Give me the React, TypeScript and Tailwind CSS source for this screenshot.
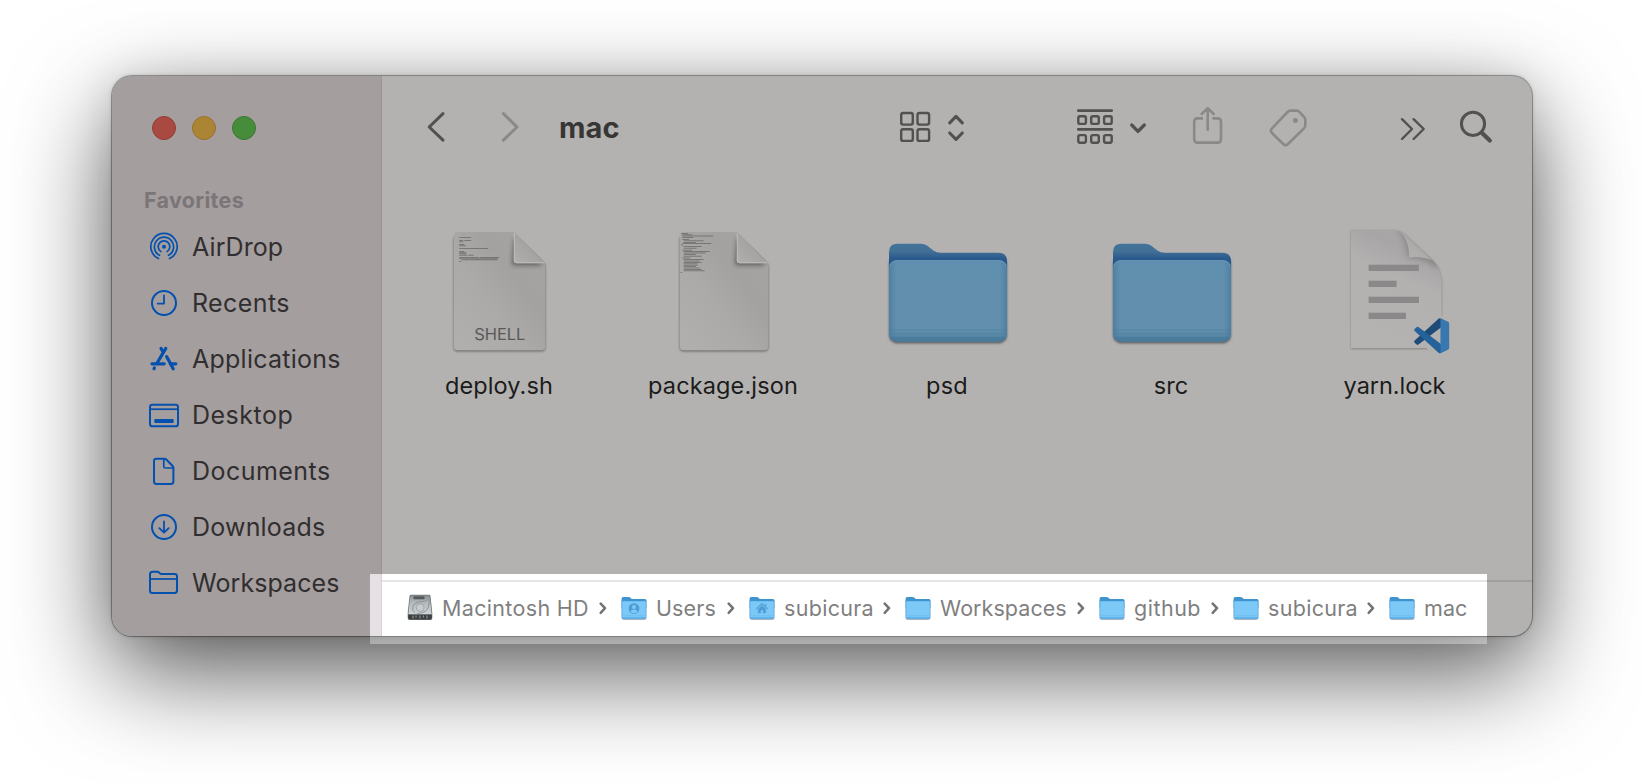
import React from "react";
import type { ReactNode } from "react";

const FONT = "font-['Inter','Liberation_Sans',sans-serif]";

/* ---------- sidebar ---------- */

function SideIcon({ children }: { children: ReactNode }) {
  return (
    <svg
      className="h-8 w-8 shrink-0 text-[#0450ae]"
      viewBox="-16 -16 32 32"
      fill="none"
      stroke="currentColor"
      strokeWidth="2"
      strokeLinecap="round"
      strokeLinejoin="round"
    >
      {children}
    </svg>
  );
}

const favorites: { label: string; track: string; pad: string; icon: ReactNode }[] = [
  {
    label: "AirDrop",
    track: "tracking-[0.1px]",
    pad: "pl-3",
    icon: (
      <g strokeWidth="1.7" transform="translate(0 -0.3)">
        <circle r="2" fill="currentColor" stroke="none" />
        <path d="M-5.6 11.9 A13.2 13.2 0 1 1 5.6 11.9" />
        <path d="M-4.5 8.6 A9.6 9.6 0 1 1 4.5 8.6" />
        <path d="M-3.1 4.9 A5.8 5.8 0 1 1 3.1 4.9" />
      </g>
    ),
  },
  {
    label: "Recents",
    track: "tracking-[0.4px]",
    pad: "pl-3",
    icon: (
      <g>
        <circle r="12" />
        <path strokeWidth="1.8" d="M0 -7.6V0.6H-6.4" />
      </g>
    ),
  },
  {
    label: "Applications",
    track: "tracking-[0.25px]",
    pad: "pl-3",
    icon: (
      <g strokeWidth="3.2" transform="translate(0 -0.2)">
        <path d="M1.8 -10.4L-6.9 4.2" />
        <path d="M-3 -10.4L-1.6 -8" />
        <path d="M-12 5H0.2" />
        <path d="M6.4 5H11.8" />
        <path d="M2.6 -2.2L9.2 10" />
        <path d="M-9.6 9.2L-10 9.9" />
      </g>
    ),
  },
  {
    label: "Desktop",
    track: "tracking-[0.5px]",
    pad: "pl-3",
    icon: (
      <g>
        <rect x="-14" y="-10.3" width="28" height="21.6" rx="2.4" />
        <path strokeWidth="1.7" strokeLinecap="butt" d="M-14 -5.8H14" />
        <rect x="-9.7" y="4" width="19.4" height="3.9" rx="0.8" fill="currentColor" stroke="none" />
      </g>
    ),
  },
  {
    label: "Documents",
    track: "tracking-[0.45px]",
    pad: "pl-3",
    icon: (
      <g>
        <path d="M-7.8 -12.3H0.4Q1.5 -12.3 2.3 -11.5L8.6 -5Q9.4 -4.2 9.4 -3V10.6Q9.4 13 7 13H-7.6Q-10 13 -10 10.6V-9.9Q-10 -12.3 -7.8 -12.3Z" />
        <path strokeWidth="1.7" d="M-0.2 -11.6V-4.4Q-0.2 -3 1.2 -3H8.6" />
      </g>
    ),
  },
  {
    label: "Downloads",
    track: "tracking-[0.2px]",
    pad: "pl-3",
    icon: (
      <g>
        <circle r="12" />
        <path strokeWidth="1.8" d="M0 -5.6V5.4M-4.7 1.1L0 5.6L4.7 1.1" />
      </g>
    ),
  },
  {
    label: "Workspaces",
    track: "tracking-[0.08px]",
    pad: "pl-3",
    icon: (
      <g>
        <path d="M-14 7.8V-8.7Q-14 -11.3 -11.4 -11.3H-6.9Q-5.7 -11.3 -4.9 -10.5L-4.3 -9.9Q-3.4 -9 -2.2 -9H10.6Q13 -9 13 -6.6V7.6Q13 10 10.6 10H-11.6Q-14 10 -14 7.8Z" />
        <path strokeWidth="1.7" strokeLinecap="butt" d="M-14 -4H13" />
      </g>
    ),
  },
];

function Sidebar() {
  return (
    <aside className="flex w-[270px] shrink-0 flex-col rounded-l-[20px] border-r border-[#9b9597] bg-[#a49e9f]">
      <div className="flex gap-4 pl-10 pt-10">
        <span className="h-6 w-6 rounded-full border border-[#963a33] bg-[#a94a42]" />
        <span className="h-6 w-6 rounded-full border border-[#97702b] bg-[#ac8534]" />
        <span className="h-6 w-6 rounded-full border border-[#357a2c] bg-[#478c3b]" />
      </div>
      <h2 className="mt-[46px] pl-8 text-[21.5px] font-bold leading-[28px] tracking-[0.3px] text-[#7b7577]">
        Favorites
      </h2>
      <ul className="mt-[5px]">
        {favorites.map((f) => (
          <li key={f.label} className="flex h-14 items-center pl-9">
            <SideIcon>{f.icon}</SideIcon>
            <span className={`${f.pad} ${f.track} text-[25px] leading-[32px] text-[#312e2f]`}>{f.label}</span>
          </li>
        ))}
      </ul>
    </aside>
  );
}

/* ---------- toolbar ---------- */

const tool = "h-14 shrink-0";

function Toolbar() {
  return (
    <header className="flex h-[104px] items-start pl-[42px] pt-6 text-[#52514f]">
      <svg className={`${tool} w-6`} viewBox="424 100 24 56" fill="none" stroke="currentColor" strokeWidth="3" strokeLinecap="round" strokeLinejoin="round">
        <path d="M443 113.6L429.2 127L443 140.2" />
      </svg>
      <svg className={`${tool} ml-[52px] w-5 text-[#8a8987]`} viewBox="500 100 20 56" fill="none" stroke="currentColor" strokeWidth="3" strokeLinecap="round" strokeLinejoin="round">
        <path d="M503.4 113.6L517 127L503.4 140.2" />
      </svg>
      <h1 className="ml-[39px] w-[339px] pt-px text-[29px] font-bold leading-[54px] tracking-[0.1px] text-[#373635]">mac</h1>
      <svg className={`${tool} w-[34px]`} viewBox="898 100 34 56" fill="none" stroke="currentColor" strokeWidth="2.4">
        <rect x="901.2" y="113" width="11.6" height="11.6" rx="2" />
        <rect x="917.5" y="113" width="11.6" height="11.6" rx="2" />
        <rect x="901.2" y="129.3" width="11.6" height="11.6" rx="2" />
        <rect x="917.5" y="129.3" width="11.6" height="11.6" rx="2" />
      </svg>
      <svg className={`${tool} ml-3.5 w-5`} viewBox="946 100 20 56" fill="none" stroke="currentColor" strokeWidth="3.1" strokeLinecap="round" strokeLinejoin="round">
        <path d="M949.7 122.8L956 116.4L962.3 122.8M949.7 133L956 139.4L962.3 133" />
      </svg>
      <svg className={`${tool} ml-[109px] w-10`} viewBox="1075 100 40 56" fill="none" stroke="currentColor" strokeWidth="2.4">
        <path strokeWidth="2.8" strokeLinecap="round" d="M1078.3 110.6H1111.7M1078.3 129.4H1111.7" />
        <rect x="1078.3" y="116.3" width="7.6" height="7.6" rx="1.6" />
        <rect x="1091.2" y="116.3" width="7.6" height="7.6" rx="1.6" />
        <rect x="1104.1" y="116.3" width="7.6" height="7.6" rx="1.6" />
        <rect x="1078.3" y="135.1" width="7.6" height="7.6" rx="1.6" />
        <rect x="1091.2" y="135.1" width="7.6" height="7.6" rx="1.6" />
        <rect x="1104.1" y="135.1" width="7.6" height="7.6" rx="1.6" />
      </svg>
      <svg className={`${tool} ml-[13px] w-5`} viewBox="1128 100 20 56" fill="none" stroke="currentColor" strokeWidth="3.3" strokeLinecap="round" strokeLinejoin="round">
        <path d="M1131.7 125L1138 131.4L1144.3 125" />
      </svg>
      <svg className={`${tool} ml-[43px] w-[34px] text-[#8a8987]`} viewBox="1191 100 34 56" fill="none" stroke="currentColor" strokeWidth="2.6" strokeLinecap="round" strokeLinejoin="round">
        <path strokeLinecap="butt" d="M1203 118.4H1197.6Q1194.2 118.4 1194.2 121.8V139.2Q1194.2 142.6 1197.6 142.6H1217.6Q1221 142.6 1221 139.2V121.8Q1221 118.4 1217.6 118.4H1212.4" />
        <path d="M1207.7 108.6V129.8M1201.7 114L1207.7 108.3L1213.7 114" />
      </svg>
      <svg className={`${tool} ml-[43px] w-10 text-[#8a8987]`} viewBox="1268 100 40 56" fill="none" stroke="currentColor" strokeWidth="2.6" strokeLinejoin="round">
        <path d="M1290.6 110.6H1296.6Q1298.3 110.6 1299.4 111.8L1304.2 117.2Q1305.3 118.4 1305.3 120V125.2Q1305.3 127 1304 128.3L1288 144Q1285.6 146.2 1283.2 144L1272.2 133.2Q1269.7 130.6 1272.2 128.1L1287.6 112Q1288.9 110.6 1290.6 110.6Z" />
        <circle cx="1295.4" cy="120.5" r="2.5" fill="currentColor" stroke="none" />
      </svg>
      <svg className={`${tool} ml-[91px] w-7`} viewBox="1399 100 28 56" fill="none" stroke="currentColor" strokeWidth="2.4" strokeLinecap="round" strokeLinejoin="round">
        <path d="M1402 119.2L1412 129L1402 139M1413.6 119.2L1423.7 129L1413.6 139" />
      </svg>
      <svg className={`${tool} ml-[31px] w-[38px]`} viewBox="1458 100 38 56" fill="none" stroke="currentColor" strokeLinecap="round">
        <circle cx="1473" cy="123.8" r="11.6" strokeWidth="3" />
        <path strokeWidth="4.2" d="M1482.3 133.2L1489.8 140.6" />
      </svg>
    </header>
  );
}

/* ---------- files ---------- */

type Rows = [number, number, number][];

function PageGlyph({ id, left, right, fold, rows, tag }: { id: string; left: number; right: number; fold: number; rows: Rows; tag?: string }) {
  const r = right;
  const l = left;
  return (
    <svg className="h-34 w-32" viewBox="-64 220 128 136">
      <defs>
        <linearGradient id={`${id}-paper`} x1="0.1" y1="0.95" x2="0.9" y2="0.15">
          <stop offset="0" stopColor="#b0afae" />
          <stop offset="0.4" stopColor="#abaaa9" />
          <stop offset="0.7" stopColor="#a3a2a1" />
          <stop offset="1" stopColor="#a5a4a3" />
        </linearGradient>
        <linearGradient id={`${id}-fold`} x1="0" y1="1" x2="0.6" y2="0.4">
          <stop offset="0" stopColor="#b1b0af" />
          <stop offset="1" stopColor="#a1a09f" />
        </linearGradient>
        <filter id={`${id}-blur`} x="-50%" y="-50%" width="200%" height="200%">
          <feGaussianBlur stdDeviation="2.4" />
        </filter>
        <filter id={`${id}-soft`} x="-20%" y="-20%" width="140%" height="140%">
          <feGaussianBlur stdDeviation="0.9" />
        </filter>
        <clipPath id={`${id}-clip`}>
          <path d={`M${l + 4} 232H${fold + 1}L${r} 263.5V346.3Q${r} 350.3 ${r - 4} 350.3H${l + 4}Q${l} 350.3 ${l} 346.3V236Q${l} 232 ${l + 4} 232Z`} />
        </clipPath>
      </defs>
      <path
        d={`M${l + 4} 234H${fold}L${r} 265V347.6Q${r} 351.6 ${r - 4} 351.6H${l + 4}Q${l} 351.6 ${l} 347.6V238Z`}
        fill="#6d6c6b"
        filter={`url(#${id}-soft)`}
      />
      <g clipPath={`url(#${id}-clip)`}>
        <rect x={l} y="230" width={r - l} height="122" fill={`url(#${id}-paper)`} />
        <path d={`M${fold + 1} 238L${fold - 1} 265H${r - 6}L${r} 258Z`} fill="#4c4b4a" opacity="0.85" filter={`url(#${id}-blur)`} />
        <path d={`M${fold + 1} 232L${r} 263.3H${fold + 3.5}Q${fold + 0.5} 263.3 ${fold + 0.5} 260.3Z`} fill={`url(#${id}-fold)`} />
        <path d={`M${fold + 1} 233V260.3Q${fold + 1} 262.8 ${fold + 3.5} 262.8H${r - 1}`} fill="none" stroke="#bebdbc" strokeWidth="1.1" />
      </g>
      {rows.map(([x, y, w], i) => (
        <rect key={i} x={l + x} y={y} width={w} height="0.8" fill="#555453" opacity="0.7" />
      ))}
      {tag && (
        <text x="0.8" y="340" textAnchor="middle" fontSize="16.5" letterSpacing="-0.1" fill="#5a5958">
          {tag}
        </text>
      )}
    </svg>
  );
}

function FolderGlyph({ id }: { id: string }) {
  return (
    <svg className="h-34 w-32" viewBox="-64 220 128 136">
      <defs>
        <linearGradient id={`${id}-back`} x1="0" y1="0" x2="0" y2="1">
          <stop offset="0" stopColor="#44739a" />
          <stop offset="0.09" stopColor="#416f96" />
          <stop offset="0.17" stopColor="#2a5a8e" />
          <stop offset="0.25" stopColor="#2a5688" />
        </linearGradient>
        <linearGradient id={`${id}-front`} x1="0" y1="0" x2="0" y2="1">
          <stop offset="0" stopColor="#5e8eb0" />
          <stop offset="0.1" stopColor="#618fae" />
          <stop offset="0.84" stopColor="#628fad" />
          <stop offset="0.85" stopColor="#5988a7" />
          <stop offset="0.88" stopColor="#5f8dab" />
          <stop offset="0.9" stopColor="#5584a4" />
          <stop offset="0.93" stopColor="#5c8aa9" />
          <stop offset="0.945" stopColor="#4b7c9e" />
          <stop offset="1" stopColor="#4a7b9d" />
        </linearGradient>
        <linearGradient id={`${id}-edge`} x1="0" y1="0" x2="1" y2="0">
          <stop offset="0" stopColor="#47799f" stopOpacity="0.7" />
          <stop offset="0.06" stopColor="#47799f" stopOpacity="0" />
          <stop offset="0.94" stopColor="#47799f" stopOpacity="0" />
          <stop offset="1" stopColor="#47799f" stopOpacity="0.7" />
        </linearGradient>
        <filter id={`${id}-soft`} x="-10%" y="-10%" width="120%" height="120%">
          <feGaussianBlur stdDeviation="1.1" />
        </filter>
      </defs>
      <rect x="-58" y="256" width="118" height="87.4" rx="8" fill="#5c6266" filter={`url(#${id}-soft)`} />
      <path
        d="M-58 252Q-58 243.7 -49.6 243.7H-26Q-22.6 243.7 -20 245.6L-13.6 250.4Q-10.4 252.8 -6.4 252.8H51Q60 252.8 60 261V330H-58Z"
        fill={`url(#${id}-back)`}
      />
      <rect x="-58" y="260.2" width="118" height="81.5" rx="8" fill={`url(#${id}-front)`} />
      <rect x="-58" y="260.2" width="118" height="81.5" rx="8" fill={`url(#${id}-edge)`} />
      <path d="M-57 266Q-55.5 260.7 -50 260.7H52Q57.5 260.7 59 266" fill="none" stroke="#7aa2be" strokeWidth="0.8" opacity="0.8" />
    </svg>
  );
}

function CodeDocGlyph() {
  return (
    <svg className="h-34 w-32" viewBox="-64 220 128 136">
      <defs>
        <linearGradient id="lock-paper" x1="0.3" y1="1" x2="0.65" y2="0">
          <stop offset="0" stopColor="#b4b3b1" />
          <stop offset="0.6" stopColor="#b2b1b0" />
          <stop offset="0.85" stopColor="#a7a5a6" />
          <stop offset="1" stopColor="#aaa9a8" />
        </linearGradient>
        <linearGradient id="lock-curl" x1="0.1" y1="0.9" x2="0.7" y2="0.3">
          <stop offset="0" stopColor="#b5b4b3" />
          <stop offset="0.6" stopColor="#adacab" />
          <stop offset="1" stopColor="#969594" />
        </linearGradient>
        <filter id="lock-soft" x="-10%" y="-10%" width="120%" height="120%">
          <feGaussianBlur stdDeviation="0.9" />
        </filter>
        <filter id="lock-blur" x="-50%" y="-50%" width="200%" height="200%">
          <feGaussianBlur stdDeviation="3" />
        </filter>
        <clipPath id="lock-clip">
          <path d="M-44 230.3H-1Q6 230.3 11.5 236L38 260.5Q46.5 269 46.5 283V348H-44Z" />
        </clipPath>
      </defs>
      <path d="M-44 230.8H-1Q6 230.8 11.5 236.5L38 261Q46.5 269.5 46.5 283.5V349H-44Z" fill="#81807f" filter="url(#lock-soft)" />
      <g clipPath="url(#lock-clip)">
        <rect x="-44" y="230" width="91" height="118" fill="url(#lock-paper)" />
        <path d="M2 229Q13 240 13 258Q28 256 42 268L48 262L12 228Z" fill="#6f6e6d" opacity="0.6" filter="url(#lock-blur)" />
        <path d="M3 230.5Q14 238 14.2 257.2Q28 256 37.500 260.500L10 233Z" fill="url(#lock-curl)" />
      </g>
      <g fill="#8a8888">
        <rect x="-26.4" y="264.7" width="50.3" height="6.3" />
        <rect x="-26.4" y="280.7" width="28" height="6.3" />
        <rect x="-26.4" y="296.7" width="50.3" height="6.3" />
        <rect x="-26.4" y="312.7" width="37.3" height="6.3" />
      </g>
      <path d="M18 333L24 325L42 317L48 316V350H33Z" fill="#b3b2b0" />
      <g transform="translate(19.2 318.3) scale(0.35)">
        <path d="M96.46 10.8L75.86 0.88A6.23 6.23 0 0 0 68.75 2.08L1.3 63.6A4.17 4.17 0 0 0 1.3 69.76L6.81 74.78A4.17 4.17 0 0 0 12.13 75L93.36 13.4A4.15 4.15 0 0 1 100 16.7V16.4A6.25 6.25 0 0 0 96.46 10.8Z" fill="#1e4b78" />
        <path d="M96.46 89.2L75.86 99.12A6.23 6.23 0 0 1 68.75 97.92L1.3 36.4A4.17 4.17 0 0 1 1.3 30.24L6.81 25.22A4.17 4.17 0 0 1 12.13 25L93.36 86.6A4.15 4.15 0 0 0 100 83.3V83.6A6.25 6.25 0 0 1 96.46 89.2Z" fill="#25629a" />
        <path d="M75.86 99.13A6.23 6.23 0 0 1 68.75 97.92C71.06 100.22 75 98.59 75 95.33V4.67C75 1.41 71.06 -0.22 68.75 2.08A6.23 6.23 0 0 1 75.86 0.87L96.46 10.78A6.25 6.25 0 0 1 100 16.41V83.59A6.25 6.25 0 0 1 96.46 89.22Z" fill="#3978ae" />
      </g>
    </svg>
  );
}

const shellRows: Rows = [
  [5.5, 237, 12], [5.5, 240, 4], [10.5, 240, 7], [5.5, 241.4, 4], [5.5, 244, 5], [5.5, 245.4, 7], [5.5, 248, 29],
  [5.5, 251, 5], [5.5, 252.4, 7], [5.5, 253.4, 7], [5.5, 254.8, 8], [14.5, 254.8, 5.5], [5.5, 257, 20], [26.5, 257, 19],
  [5.5, 258.4, 10], [16, 258.4, 28], [8, 259.4, 36], [5.5, 261.2, 2],
];
const packageRows: Rows = [
  [1.5, 233.2, 7], [2.5, 234.4, 10], [2.5, 235.6, 31], [2.5, 237.2, 11], [2.5, 239.2, 7], [4, 240.4, 20], [4, 242, 12],
  [2.5, 243, 29], [1.5, 244.6, 2], [4, 246.2, 18], [4, 247.8, 13], [2.5, 249.8, 10], [4, 251.2, 26], [4, 252.6, 22],
  [4, 254.2, 12], [4, 255.8, 18], [2.5, 257.6, 8], [4, 259.2, 20], [4, 260.6, 16], [4, 262, 18], [4, 263.4, 14],
  [4, 264.8, 14], [4, 266.2, 12], [4, 267.6, 16], [4, 269, 18], [4, 270.4, 21], [1, 272, 1.5],
];

const files: { name: string; track: string; icon: ReactNode }[] = [
  { name: "deploy.sh", track: "tracking-[0.1px]", icon: <PageGlyph id="deploy" left={-45.3} right={46.3} fold={14.3} rows={shellRows} tag="SHELL" /> },
  { name: "package.json", track: "tracking-[0.13px]", icon: <PageGlyph id="package" left={-43.3} right={45.3} fold={13.3} rows={packageRows} /> },
  { name: "psd", track: "tracking-[0.2px]", icon: <FolderGlyph id="psd" /> },
  { name: "src", track: "tracking-[0.05px]", icon: <FolderGlyph id="src" /> },
  { name: "yarn.lock", track: "pr-px tracking-[-0.05px]", icon: <CodeDocGlyph /> },
];

function FileGrid() {
  return (
    <div className="grid grid-cols-[repeat(5,224px)] pl-[5px] pt-10">
      {files.map((f) => (
        <figure key={f.name} className="flex flex-col items-center">
          {f.icon}
          <figcaption className={`mt-[15px] text-[23.5px] leading-[30px] text-[#1c1b1b] ${f.track}`}>{f.name}</figcaption>
        </figure>
      ))}
    </div>
  );
}

/* ---------- path bar ---------- */

function SmallFolder({ badge }: { badge?: "user" | "home" }) {
  return (
    <svg className="h-7 w-[26px] shrink-0" viewBox="0 0 26 28">
      <rect x="0.6" y="5" width="24.8" height="20.9" rx="1.8" fill="#7d8a92" opacity="0.65" />
      <path d="M0.6 4.6Q0.6 3 2.2 3H7.6Q8.5 3 9.2 3.6L10.2 4.4Q10.9 5 11.8 5H23.8Q25.4 5 25.4 6.6V14H0.6Z" fill="#3f93cf" />
      <rect x="0.6" y="7" width="24.8" height="18" rx="1.6" fill="#5fb3ea" />
      <rect x="1.4" y="7.4" width="23.2" height="14" rx="1" fill="#7cc9f8" />
      <rect x="1" y="21.8" width="24" height="0.9" fill="#86cdf7" />
      {badge === "user" && (
        <g>
          <circle cx="13" cy="14.6" r="5.4" fill="#4c9dd4" />
          <circle cx="13" cy="12.9" r="2" fill="#7cc9f8" />
          <path d="M9.4 17.9Q10.2 15.6 13 15.6Q15.8 15.6 16.6 17.9Q15 19.2 13 19.2Q11 19.2 9.4 17.9Z" fill="#7cc9f8" />
        </g>
      )}
      {badge === "home" && (
        <g fill="none" stroke="#4c9dd4" strokeWidth="1.1" strokeLinejoin="round" strokeLinecap="round">
          <path d="M7.6 14.6L13 9.6L18.4 14.6" />
          <path d="M9.3 14.9L13 11.6L16.7 14.9V19H14.3V16H11.7V19H9.3Z" fill="#4c9dd4" strokeWidth="0.4" />
          <path d="M16.6 10.2V12" />
        </g>
      )}
    </svg>
  );
}

function DiskIcon() {
  return (
    <svg className="h-7 w-[26px] shrink-0" viewBox="0 0 26 28">
      <defs>
        <linearGradient id="disk-top" x1="0" y1="0" x2="0" y2="1">
          <stop offset="0" stopColor="#8a9092" />
          <stop offset="0.35" stopColor="#b0b7ba" />
          <stop offset="1" stopColor="#cdd3d6" />
        </linearGradient>
      </defs>
      <path d="M4 0.8H22Q23.2 0.8 23.5 2L25.3 19V24Q25.3 26 23.3 26H2.7Q0.7 26 0.7 24V19L2.5 2Q2.8 0.8 4 0.8Z" fill="#6f7476" />
      <path d="M4.2 1.5H21.8Q22.6 1.5 22.8 2.4L24.6 20H1.4L3.2 2.4Q3.4 1.5 4.2 1.5Z" fill="url(#disk-top)" />
      <rect x="6.5" y="2.2" width="11" height="3" rx="0.5" fill="#55595b" />
      <path d="M22 3V10C21.500 16 17 19.500 10 19.300" fill="none" stroke="#878e91" strokeWidth="0.9" />
      <path d="M20.500 5C19 8.500 14 6.800 10 8.600C5 11 4 16 8 18.800" fill="none" stroke="#878e91" strokeWidth="0.9" />
      <circle cx="13.2" cy="13.6" r="3.900" fill="#c6ccce" stroke="#989fa2" strokeWidth="0.8" />
      <path d="M1.2 21H24.8V23.8Q24.8 25.5 23.2 25.5H2.8Q1.2 25.5 1.2 23.8Z" fill="#3d4042" />
      <path d="M6 21.5V24.5M9 21.5V23.5M13 21.5V24.5M16.5 21.5V23.5M20 21.5V24.5" stroke="#8f9496" strokeWidth="1.1" />
    </svg>
  );
}

const crumbs: { label: string; width: string; track: string; icon: ReactNode }[] = [
  { label: "Macintosh HD", width: "w-[214px]", track: "pl-[9px] tracking-[0.33px]", icon: <DiskIcon /> },
  { label: "Users", width: "w-32", track: "pl-[9px] tracking-[0.1px]", icon: <SmallFolder badge="user" /> },
  { label: "subicura", width: "w-[156px]", track: "pl-[9px] tracking-[0.3px]", icon: <SmallFolder badge="home" /> },
  { label: "Workspaces", width: "w-[194px]", track: "pl-[9px] tracking-[0.06px]", icon: <SmallFolder /> },
  { label: "github", width: "w-[134px]", track: "pl-[9px] tracking-[0.5px]", icon: <SmallFolder /> },
  { label: "subicura", width: "w-[156px]", track: "pl-[9px] tracking-[0.3px]", icon: <SmallFolder /> },
  { label: "mac", width: "w-[80px]", track: "pl-[9px] tracking-[0.1px]", icon: <SmallFolder /> },
];

function PathBar() {
  return (
    <nav className="relative z-10 mt-auto flex h-14 items-center border-t-2 border-black/10 pb-0.5 pl-[25px]">
      {crumbs.map((c, i) => (
        <div key={i} className={`flex shrink-0 items-center ${c.width}`}>
          {c.icon}
          <span className={`whitespace-nowrap text-[21.5px] leading-[28px] text-[#7f7f7f] ${c.track}`}>{c.label}</span>
          {i < crumbs.length - 1 && (
            <svg className="ml-auto mr-[14px] h-3.5 w-2" viewBox="0 0 8 14" fill="none" stroke="#747474" strokeWidth="2.5" strokeLinecap="round" strokeLinejoin="round">
              <path d="M1.7 2.6L6 7.2L1.7 11.8" />
            </svg>
          )}
        </div>
      ))}
    </nav>
  );
}

/* ---------- window ---------- */

export default function App() {
  return (
    <div className={`h-[784px] w-[1644px] overflow-hidden bg-white pl-28 pt-19 ${FONT}`}>
      <div className="relative flex h-[560px] w-[1420px] rounded-[20px] bg-[#b3b2b0] shadow-[0_0_0_1px_rgba(0,0,0,0.3),0_0_4px_rgba(0,0,0,0.2),0_36px_100px_rgba(0,0,0,0.66),0_0_40px_rgba(0,0,0,0.1)]">
        <Sidebar />
        <main className="flex flex-1 flex-col">
          <Toolbar />
          <FileGrid />
          <PathBar />
        </main>
        <div className="absolute left-[258px] top-[498px] flex h-[70px] w-[1117px] flex-col">
          <div className="flex h-[63px] border-b border-[#7f7f7f]">
            <div className="w-3 border-r border-[#d9d3d7] bg-[#e6e0e4]" />
            <div className="flex-1 bg-white" />
          </div>
          <div className="flex-1 bg-white/35" />
        </div>
      </div>
    </div>
  );
}
